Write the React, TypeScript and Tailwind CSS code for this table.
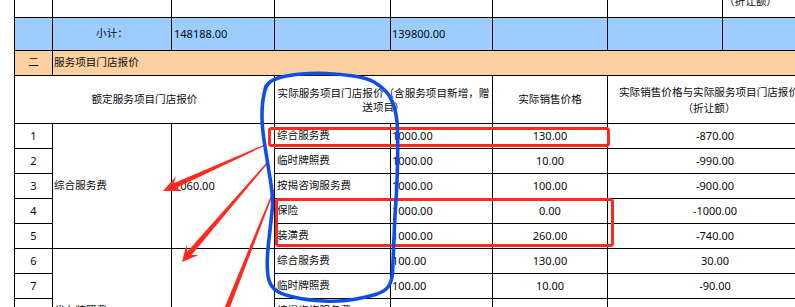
import React from "react";

type Pt = [number, number];

function arrowPoints(t: Pt, p: Pt, L: number, W: number, w: number): string {
  const dx = p[0] - t[0];
  const dy = p[1] - t[1];
  const len = Math.hypot(dx, dy);
  const ux = dx / len;
  const uy = dy / len;
  const nx = -uy;
  const ny = ux;
  const neck: Pt = [p[0] - ux * L * 0.72, p[1] - uy * L * 0.72];
  const barb: Pt = [p[0] - ux * L, p[1] - uy * L];
  const pts: Pt[] = [
    [t[0] + nx * 0.6, t[1] + ny * 0.6],
    [neck[0] + nx * w, neck[1] + ny * w],
    [barb[0] + nx * W, barb[1] + ny * W],
    [p[0], p[1]],
    [barb[0] - nx * W, barb[1] - ny * W],
    [neck[0] - nx * w, neck[1] - ny * w],
    [t[0] - nx * 0.6, t[1] - ny * 0.6],
  ];
  return pts.map((q) => `${q[0].toFixed(1)},${q[1].toFixed(1)}`).join(" ");
}

function smoothPath(pts: Pt[]): string {
  let d = `M ${pts[0][0]} ${pts[0][1]}`;
  for (let i = 1; i < pts.length - 1; i++) {
    const mx = (pts[i][0] + pts[i + 1][0]) / 2;
    const my = (pts[i][1] + pts[i + 1][1]) / 2;
    d += ` Q ${pts[i][0]} ${pts[i][1]} ${mx} ${my}`;
  }
  const last = pts[pts.length - 1];
  d += ` L ${last[0]} ${last[1]}`;
  return d;
}

const bluePts: Pt[] = [
  [264, 94], [266, 85], [274, 79], [290, 75], [313, 73], [340, 74], [367, 78],
  [381, 86], [391, 97], [397, 116], [398, 143], [397, 187], [395, 213],
  [393, 263], [392, 282], [384, 292], [367, 297], [340, 302], [307, 300],
  [284, 295], [273, 289], [268, 279], [267, 263], [268, 247], [272, 213],
  [273, 197], [268, 165], [262, 128], [262, 106], [264, 94], [266, 86],
];

function C({
  className = "",
  children,
}: {
  className?: string;
  children?: React.ReactNode;
}) {
  return (
    <div
      className={
        "border-r border-b border-black flex items-center overflow-hidden whitespace-nowrap " +
        className
      }
    >
      {children}
    </div>
  );
}

const rows = [
  { n: "1", item: "综合服务费", actual: "1000.00", sale: "130.00", diff: "-870.00" },
  { n: "2", item: "临时牌照费", actual: "1000.00", sale: "10.00", diff: "-990.00" },
  { n: "3", item: "按揭咨询服务费", actual: "1000.00", sale: "100.00", diff: "-900.00" },
  { n: "4", item: "保险", actual: "1000.00", sale: "0.00", diff: "-1000.00" },
  { n: "5", item: "装潢费", actual: "1000.00", sale: "260.00", diff: "-740.00" },
];
const rows2 = [
  { n: "6", item: "综合服务费", actual: "100.00", sale: "130.00", diff: "30.00" },
  { n: "7", item: "临时牌照费", actual: "100.00", sale: "10.00", diff: "-90.00" },
  { n: "8", item: "按揭咨询服务费", actual: "", sale: "", diff: "" },
];

export default function App() {
  const blue = "bg-[#9ccdfe]";
  return (
    <div className="relative w-[795px] h-[307px] overflow-hidden bg-white text-[#0a0a0a] font-['Noto_Sans','Noto_Sans_CJK_SC',sans-serif] text-[10.6px]">
      <div className="ml-[14px] w-[900px] border-l border-black grid grid-cols-[38px_119px_103px_116px_102px_115px_115px_100px] grid-rows-[18px_33px_25px_48px_25px_25px_25px_25px_25px_25px_25px_25px_25px_25px]">
        {/* cut-off previous row */}
        <C />
        <C />
        <C />
        <C />
        <C />
        <C />
        <C />
        <C className="items-start pl-[1px]">
          <div className="-mt-[6px] leading-[14px]">（折让额）</div>
        </C>

        {/* subtotal */}
        <C className={blue} />
        <C className={blue + " justify-center"}>小计：</C>
        <C className={blue + " pl-[2px] text-[11px]"}>148188.00</C>
        <C className={blue} />
        <C className={blue + " pl-[1px] text-[11px]"}>139800.00</C>
        <C className={blue} />
        <C className={blue} />
        <C className={blue} />

        {/* section */}
        <C className="bg-[#fdd09f] justify-center">二</C>
        <C className="bg-[#fdd09f] col-span-7 pl-[1px]">服务项目门店报价</C>

        {/* header */}
        <C className="col-span-3 justify-center">额定服务项目门店报价</C>
        <C className="col-span-2 justify-center text-center leading-[14px]">
          <div>
            实际服务项目门店报价（含服务项目新增，赠
            <br />
            送项目）
          </div>
        </C>
        <C className="justify-center">实际销售价格</C>
        <C className="col-span-2 justify-center text-center leading-[16px] pr-[12px]">
          <div>
            实际销售价格与实际服务项目门店报价
            <br />
            （折让额）
          </div>
        </C>

        {rows.map((r, i) => (
          <React.Fragment key={r.n}>
            <C className="justify-center text-[11px]">{r.n}</C>
            {i === 0 && (
              <>
                <C className="row-span-5 pl-[1px]">综合服务费</C>
                <C className="row-span-5 pl-[2px] text-[11px]">1060.00</C>
              </>
            )}
            <C className="pl-[2px]">{r.item}</C>
            <C className="pl-[1px] text-[11px]">{r.actual}</C>
            <C className="justify-center text-[11px]">{r.sale}</C>
            <C className="col-span-2 justify-center text-[11px]">{r.diff}</C>
          </React.Fragment>
        ))}

        {rows2.map((r, i) => (
          <React.Fragment key={r.n}>
            <C className="justify-center text-[11px]">{r.n}</C>
            {i === 0 && (
              <>
                <C className="row-span-5 pl-[1px]">代办牌照费</C>
                <C className="row-span-5" />
              </>
            )}
            <C className="pl-[2px]">{r.item}</C>
            <C className="pl-[1px] text-[11px]">{r.actual}</C>
            <C className="justify-center text-[11px]">{r.sale}</C>
            <C className="col-span-2 justify-center text-[11px]">{r.diff}</C>
          </React.Fragment>
        ))}
      </div>

      {/* annotations */}
      <svg
        className="absolute left-0 top-0 pointer-events-none"
        width={795}
        height={307}
        viewBox="0 0 795 307"
      >
        <g fill="#ff2a1f">
          <polygon points={arrowPoints([265, 145], [163, 191], 18, 8, 2.6)} />
          <polygon points={arrowPoints([268, 162], [182, 262], 16, 8, 2.8)} />
          <polygon points={arrowPoints([274, 190], [208, 356], 18, 8, 3)} />
        </g>
        <g fill="none" stroke="#ff2a1f" strokeWidth={3}>
          <rect x={269.5} y={128.5} width={339} height={17} rx={2} />
          <rect x={276.5} y={199.5} width={336} height={46} rx={2} />
        </g>
        <path
          d={smoothPath(bluePts)}
          fill="none"
          stroke="#0f4fe6"
          strokeWidth={3.6}
          strokeLinecap="round"
          strokeLinejoin="round"
        />
      </svg>
    </div>
  );
}
